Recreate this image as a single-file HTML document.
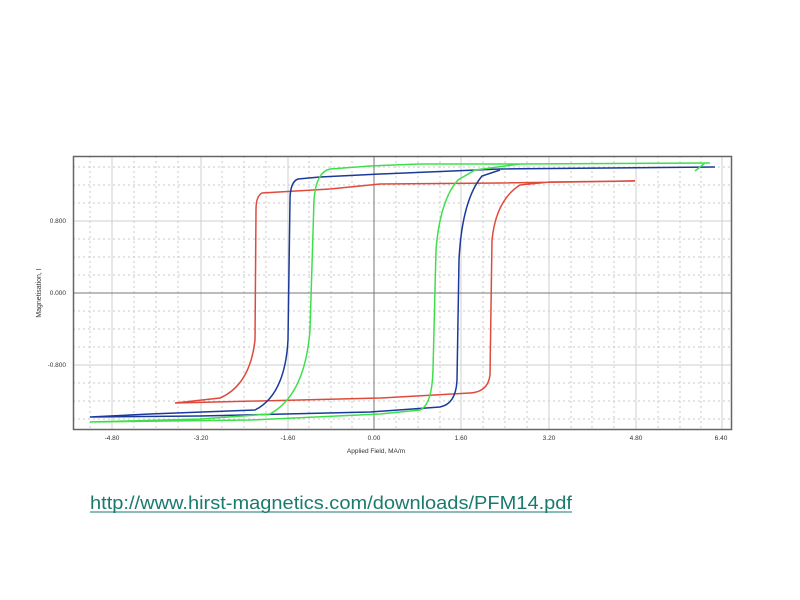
<!DOCTYPE html>
<html><head><meta charset="utf-8"><style>
html,body{margin:0;padding:0;background:#fff;width:800px;height:600px;overflow:hidden}
svg{display:block}
</style></head><body>
<svg width="800" height="600" viewBox="0 0 800 600" xmlns="http://www.w3.org/2000/svg" font-family="Liberation Sans, sans-serif">
<rect width="800" height="600" fill="#fff"/>
<g stroke="#c8c8c8" stroke-width="1" stroke-dasharray="2,3">
<line x1="90" y1="156" x2="90" y2="429"/><line x1="134" y1="156" x2="134" y2="429"/><line x1="156" y1="156" x2="156" y2="429"/><line x1="178" y1="156" x2="178" y2="429"/>
<line x1="222" y1="156" x2="222" y2="429"/><line x1="244" y1="156" x2="244" y2="429"/><line x1="266" y1="156" x2="266" y2="429"/>
<line x1="309" y1="156" x2="309" y2="429"/><line x1="331" y1="156" x2="331" y2="429"/><line x1="352" y1="156" x2="352" y2="429"/>
<line x1="396" y1="156" x2="396" y2="429"/><line x1="418" y1="156" x2="418" y2="429"/><line x1="440" y1="156" x2="440" y2="429"/>
<line x1="483" y1="156" x2="483" y2="429"/><line x1="505" y1="156" x2="505" y2="429"/><line x1="527" y1="156" x2="527" y2="429"/>
<line x1="571" y1="156" x2="571" y2="429"/><line x1="592" y1="156" x2="592" y2="429"/><line x1="614" y1="156" x2="614" y2="429"/>
<line x1="658" y1="156" x2="658" y2="429"/><line x1="680" y1="156" x2="680" y2="429"/><line x1="701" y1="156" x2="701" y2="429"/>
<line x1="73" y1="167" x2="731" y2="167"/><line x1="73" y1="185" x2="731" y2="185"/><line x1="73" y1="203" x2="731" y2="203"/>
<line x1="73" y1="239" x2="731" y2="239"/><line x1="73" y1="257" x2="731" y2="257"/><line x1="73" y1="275" x2="731" y2="275"/>
<line x1="73" y1="311" x2="731" y2="311"/><line x1="73" y1="329" x2="731" y2="329"/><line x1="73" y1="347" x2="731" y2="347"/>
<line x1="73" y1="383" x2="731" y2="383"/><line x1="73" y1="401" x2="731" y2="401"/><line x1="73" y1="419" x2="731" y2="419"/>
</g>
<g stroke="#cfcfcf" stroke-width="1">
<line x1="112" y1="156" x2="112" y2="429"/><line x1="201" y1="156" x2="201" y2="429"/><line x1="288" y1="156" x2="288" y2="429"/>
<line x1="461" y1="156" x2="461" y2="429"/><line x1="549" y1="156" x2="549" y2="429"/><line x1="636" y1="156" x2="636" y2="429"/><line x1="722" y1="156" x2="722" y2="429"/>
<line x1="73" y1="221" x2="731" y2="221"/><line x1="73" y1="365" x2="731" y2="365"/>
</g>
<line x1="374" y1="156" x2="374" y2="429" stroke="#777"/>
<line x1="73" y1="293" x2="731" y2="293" stroke="#777"/>
<rect x="73.5" y="156.5" width="658" height="273" fill="none" stroke="#666" stroke-width="1.5"/>
<g fill="none" stroke-width="1.5">
<path stroke="#e04a3c" d="M635,181 L500,183 L380,184 L330,189 L262,193 Q256,196 256,210 L255,340 Q250,385 220,398 L175,403 L380,398 L470,393 Q488,392 490,375 L492,240 Q496,200 520,185 L550,182 L635,181"/>
<path stroke="#1a3a9a" d="M715,167 L500,169 L380,174 L320,177 L298,179 Q290,182 290,200 L288,340 Q285,395 255,410 L150,414 L90,417 L200,416 L370,412 L440,407 Q456,404 457,380 L459,260 Q462,200 482,176 L500,170"/>
<path stroke="#3ee04a" d="M710,163 L520,164 L420,164 L370,166 L330,169 Q316,172 314,200 L310,330 Q305,395 270,414 L200,419 L90,422 L250,420 L380,414 L420,410 Q432,405 433,370 L436,250 Q440,200 458,180 L475,170 L520,164 M695,171 L705,163"/>
</g>
<g font-size="6.5" fill="#333" text-anchor="middle">
<text x="112" y="440">-4.80</text><text x="201" y="440">-3.20</text><text x="288" y="440">-1.60</text><text x="374" y="440">0.00</text>
<text x="461" y="440">1.60</text><text x="549" y="440">3.20</text><text x="636" y="440">4.80</text><text x="721" y="440">6.40</text>
</g>
<g font-size="6.5" fill="#333" text-anchor="end">
<text x="66" y="223">0.800</text><text x="66" y="295">0.000</text><text x="66" y="367">-0.800</text>
</g>
<text x="376" y="453" font-size="6.5" fill="#333" text-anchor="middle">Applied Field, MA/m</text>
<text transform="translate(41,293) rotate(-90)" font-size="7" fill="#333" text-anchor="middle">Magnetisation, I</text>
<text x="90" y="509" font-size="18" fill="#1a7a6e" textLength="482" lengthAdjust="spacingAndGlyphs">http://www.hirst-magnetics.com/downloads/PFM14.pdf</text>
<line x1="90" y1="512" x2="572" y2="512" stroke="#1a7a6e" stroke-width="1"/>
</svg>
</body></html>
